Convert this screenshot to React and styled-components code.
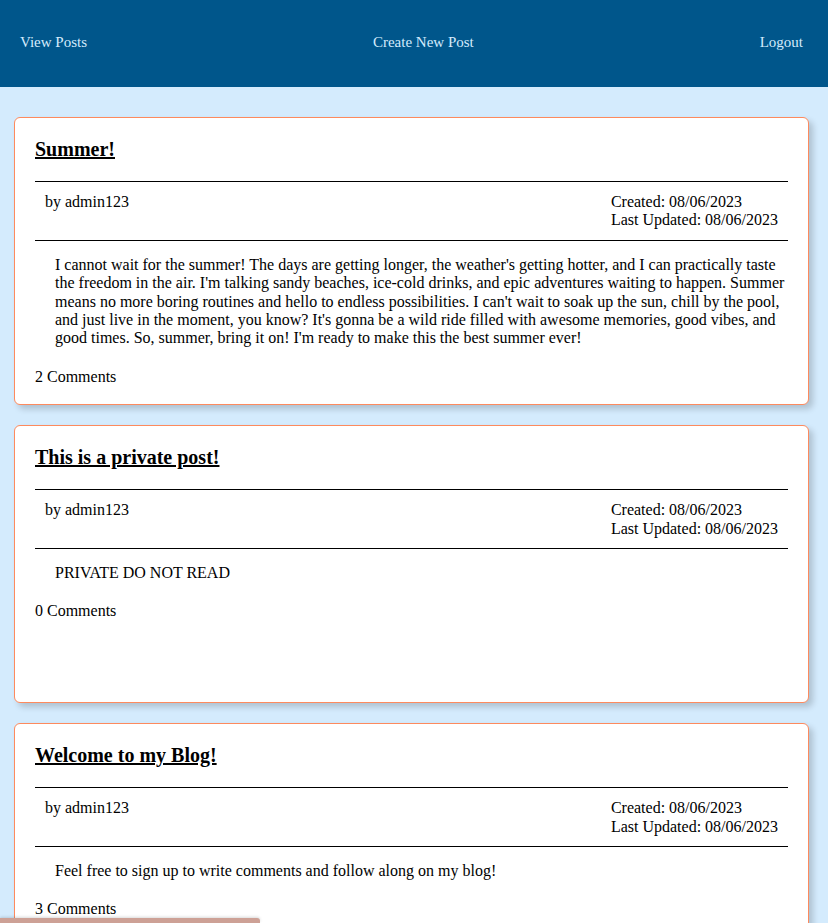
import React from "react";
import styled, { createGlobalStyle } from "styled-components";

const GlobalStyle = createGlobalStyle`
  html, body {
    margin: 0;
    padding: 0;
    background: #d4ebfd;
    font-family: "Liberation Serif", "Times New Roman", serif;
    font-size: 16px;
    color: #000;
    scrollbar-width: none;
  }
  html::-webkit-scrollbar, body::-webkit-scrollbar { display: none; }
  * { box-sizing: border-box; }
`;

const NavBar = styled.nav`
  height: 87px;
  background: #00568b;
  display: flex;
  align-items: center;
  justify-content: space-between;
  padding: 0 25px 3px 20px;
`;

const NavLink = styled.a`
  color: #d4ebfd;
  text-decoration: none;
  font-size: 15px;
  cursor: pointer;
`;

const Main = styled.main`
  display: flex;
  flex-direction: column;
  gap: 20px;
  padding: 30px 19px 20px 14px;
`;

const Card = styled.article`
  background: #fff;
  border: 1px solid #fd8a5e;
  border-radius: 6px;
  box-shadow: 4px 4px 6px rgba(0, 0, 0, 0.18);
  padding: 20px 20px 18px;
  min-height: 278px;
`;

const Title = styled.h2`
  margin: 0 0 20px;
  font-size: 20px;
  line-height: 23px;
  font-weight: bold;
  text-decoration: underline;
`;

const Rule = styled.hr`
  margin: 0;
  border: none;
  border-top: 1px solid #000;
`;

const Meta = styled.div`
  display: flex;
  justify-content: space-between;
  align-items: flex-start;
  padding: 11px 10px 10px;
  line-height: 18.4px;
`;

const Dates = styled.div`
  display: flex;
  flex-direction: column;
`;

const Body = styled.p`
  margin: 0;
  padding: 15px 0 0 20px;
  line-height: 18.4px;
`;

const Comments = styled.div`
  margin-top: 20px;
  line-height: 18.4px;
`;

const BottomBar = styled.div`
  position: fixed;
  left: 0;
  bottom: 0;
  width: 260px;
  height: 5px;
  background: #cda196;
  border-top-right-radius: 3px;
  box-shadow: 0 -1px 3px rgba(0, 0, 0, 0.15);
`;

const posts = [
  {
    title: "Summer!",
    body:
      "I cannot wait for the summer! The days are getting longer, the weather's getting hotter, and I can practically taste the freedom in the air. I'm talking sandy beaches, ice-cold drinks, and epic adventures waiting to happen. Summer means no more boring routines and hello to endless possibilities. I can't wait to soak up the sun, chill by the pool, and just live in the moment, you know? It's gonna be a wild ride filled with awesome memories, good vibes, and good times. So, summer, bring it on! I'm ready to make this the best summer ever!",
    comments: 2,
  },
  { title: "This is a private post!", body: "PRIVATE DO NOT READ", comments: 0 },
  {
    title: "Welcome to my Blog!",
    body: "Feel free to sign up to write comments and follow along on my blog!",
    comments: 3,
  },
];

export default function App() {
  return (
    <>
      <GlobalStyle />
      <NavBar>
        <NavLink>View Posts</NavLink>
        <NavLink>Create New Post</NavLink>
        <NavLink>Logout</NavLink>
      </NavBar>
      <Main>
        {posts.map((p) => (
          <Card key={p.title}>
            <Title>{p.title}</Title>
            <Rule />
            <Meta>
              <span>by admin123</span>
              <Dates>
                <span>Created: 08/06/2023</span>
                <span>Last Updated: 08/06/2023</span>
              </Dates>
            </Meta>
            <Rule />
            <Body>{p.body}</Body>
            <Comments>{p.comments} Comments</Comments>
          </Card>
        ))}
      </Main>
      <BottomBar />
    </>
  );
}
